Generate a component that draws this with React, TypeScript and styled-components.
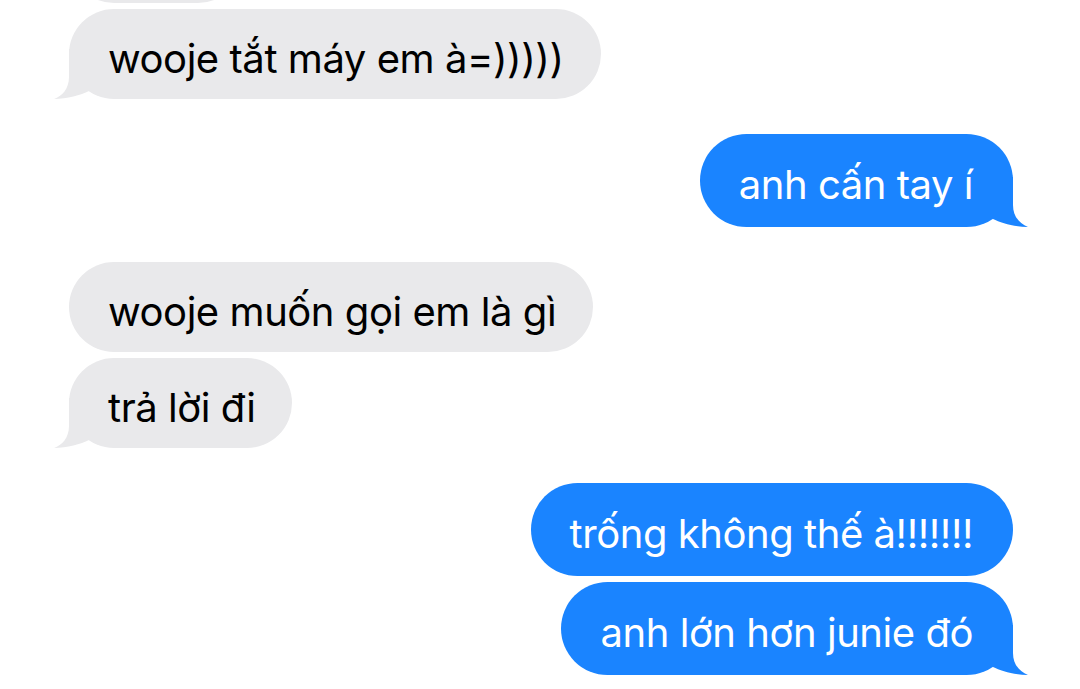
import React from "react";
import styled, { createGlobalStyle } from "styled-components";

const Global = createGlobalStyle`
  html, body { margin: 0; padding: 0; background: #ffffff; }
  body { font-family: Inter, "Noto Sans", "Liberation Sans", sans-serif; }
`;

const BLUE = "#1A84FF";
const GRAY = "#E9E9EB";

const Screen = styled.main`
  width: 1080px;
  height: 689px;
  overflow: hidden;
  box-sizing: border-box;
  display: flex;
  flex-direction: column;
  justify-content: flex-end;
  padding: 0 67px 14px 69px;
  background: #ffffff;
`;

const Group = styled.section<{ $me: boolean }>`
  display: flex;
  flex-direction: column;
  gap: 6px;
  align-items: ${(p) => (p.$me ? "flex-end" : "flex-start")};
  & + & {
    margin-top: 35px;
  }
`;

const Bubble = styled.div<{ $me: boolean }>`
  position: relative;
  box-sizing: border-box;
  height: ${(p) => (p.$me ? 93 : 90)}px;
  padding: ${(p) => (p.$me ? "9px 40px 0 39px" : "9px 37px 0 39px")};
  display: flex;
  align-items: center;
  border-radius: 47px;
  background: ${(p) => (p.$me ? BLUE : GRAY)};
  color: ${(p) => (p.$me ? "#ffffff" : "#000000")};
  font-size: 40px;
  line-height: 1;
  letter-spacing: -0.45px;
  white-space: nowrap;
`;

const TailSvg = styled.svg<{ $me: boolean }>`
  position: absolute;
  bottom: 0;
  width: 45px;
  height: 50px;
  ${(p) => (p.$me ? "right: -15px;" : "left: -15px; transform: scaleX(-1);")}
  fill: ${(p) => (p.$me ? BLUE : GRAY)};
`;

const Tail = ({ me }: { me: boolean }) => (
  <TailSvg $me={me} viewBox="0 0 45 50" aria-hidden="true">
    <path d="M10 42 C18 46 32 50 45 50 C37 47 30 40 30 28 L30 0 L10 0 Z" />
  </TailSvg>
);

type Msg = { text: string };
type Grp = { me: boolean; msgs: Msg[] };

const groups: Grp[] = [
  { me: false, msgs: [{ text: "alo ơi" }, { text: "wooje tắt máy em à=)))))" }] },
  { me: true, msgs: [{ text: "anh cấn tay í" }] },
  { me: false, msgs: [{ text: "wooje muốn gọi em là gì" }, { text: "trả lời đi" }] },
  { me: true, msgs: [{ text: "trống không thế à!!!!!!!" }, { text: "anh lớn hơn junie đó" }] },
];

export default function App() {
  return (
    <>
      <Global />
      <Screen>
        {groups.map((g, gi) => (
          <Group key={gi} $me={g.me}>
            {g.msgs.map((m, mi) => (
              <Bubble key={mi} $me={g.me}>
                {m.text}
                {mi === g.msgs.length - 1 && <Tail me={g.me} />}
              </Bubble>
            ))}
          </Group>
        ))}
      </Screen>
    </>
  );
}
